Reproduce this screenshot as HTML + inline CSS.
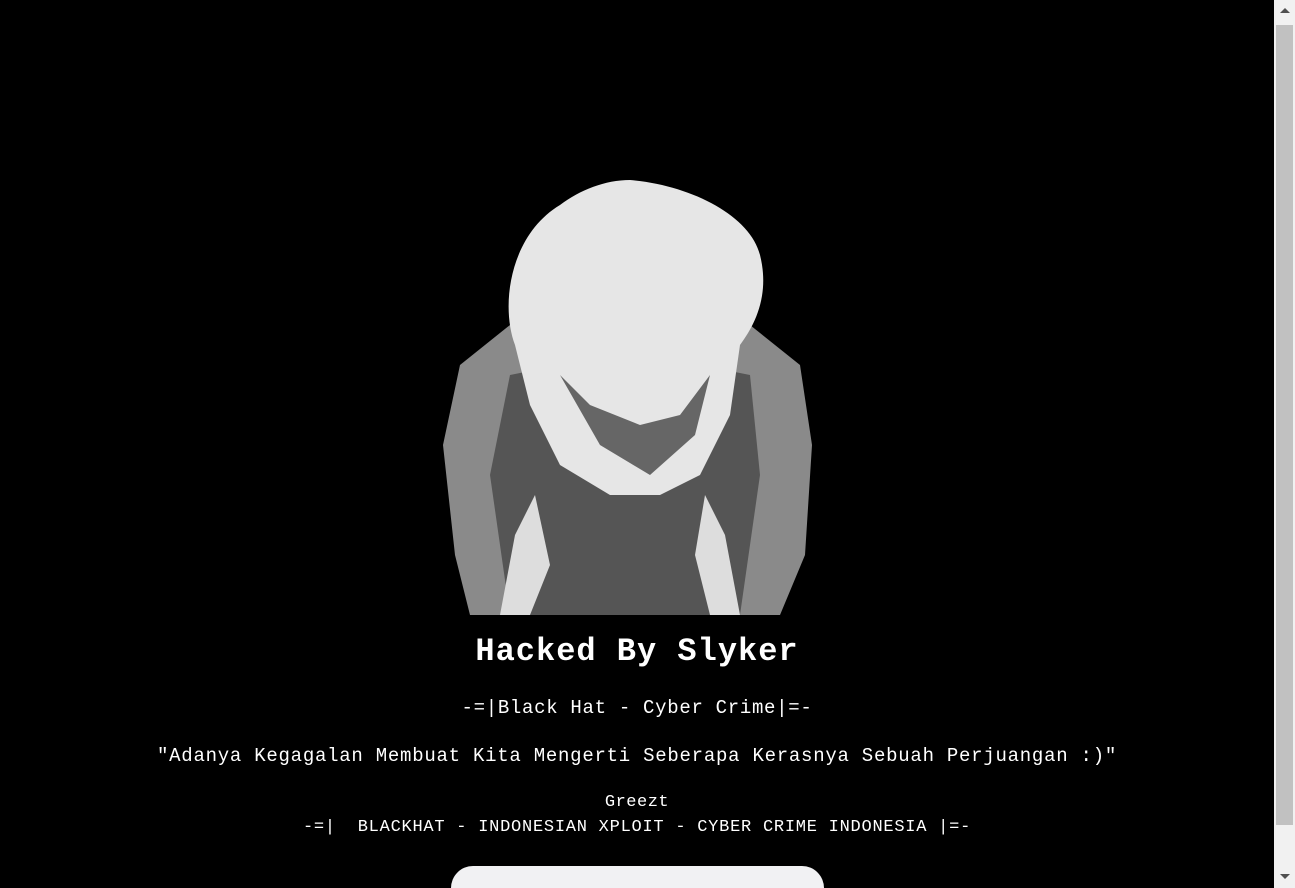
<!DOCTYPE html>
<html><head><style>
html,body{margin:0;padding:0;background:#000;overflow:hidden;}
body{width:1295px;height:888px;position:relative;font-family:"Liberation Mono",monospace;color:#fff;}
.t{position:absolute;left:0;width:1274px;text-align:center;white-space:nowrap;}
.sb{position:absolute;left:1274px;top:0;width:21px;height:888px;background:#f1f1f1;}
.th{position:absolute;left:1276px;top:25px;width:17px;height:800px;background:#c1c1c1;}
</style></head><body>
<svg style="position:absolute;left:440px;top:175px" width="375" height="440" viewBox="0 0 375 440">
<rect x="0" y="0" width="375" height="440" fill="#000"/>
<path d="M20 190 L70 150 L120 150 L140 200 L230 200 L260 150 L310 150 L360 190 L372 270 L365 380 L340 440 L30 440 L15 380 L3 270 Z" fill="#8a8a8a"/>
<path d="M70 200 L120 190 L150 260 L220 260 L260 190 L310 200 L320 300 L300 440 L70 440 L50 300 Z" fill="#555"/>
<path d="M190 5 C250 10 310 40 320 80 C330 120 315 150 300 170 L290 240 L260 300 L220 320 L170 320 L120 290 L90 230 L75 170 C60 130 70 60 120 30 C140 15 165 5 190 5 Z" fill="#e6e6e6"/>
<path d="M120 200 L160 270 L210 300 L255 260 L270 200 L240 240 L200 250 L150 230 Z" fill="#666"/>
<path d="M95 320 L110 390 L90 440 L60 440 L75 360 Z" fill="#ddd"/>
<path d="M265 320 L285 360 L300 440 L270 440 L255 380 Z" fill="#ddd"/>
</svg>
<div class="t" style="top:633px;font-size:32px;font-weight:bold;letter-spacing:1px;">Hacked By Slyker</div>
<div class="t" style="top:697px;font-size:19px;letter-spacing:0.7px;">-=|Black Hat - Cyber Crime|=-</div>
<div class="t" style="top:745px;font-size:19px;letter-spacing:0.75px;">"Adanya Kegagalan Membuat Kita Mengerti Seberapa Kerasnya Sebuah Perjuangan :)"</div>
<div class="t" style="top:793px;font-size:17px;letter-spacing:0.5px;">Greezt</div>
<div class="t" style="top:818px;font-size:17px;letter-spacing:0.75px;">-=|&nbsp;&nbsp;BLACKHAT - INDONESIAN XPLOIT - CYBER CRIME INDONESIA |=-</div>
<div style="position:absolute;left:451px;top:866px;width:373px;height:22px;border-radius:40px 40px 0 0;background:#f1f1f3;"></div>
<div class="sb"></div><div class="th"></div>
<div style="position:absolute;left:1280px;top:8px;width:0;height:0;border-left:5px solid transparent;border-right:5px solid transparent;border-bottom:5px solid #505050;"></div>
<div style="position:absolute;left:1280px;top:874px;width:0;height:0;border-left:5px solid transparent;border-right:5px solid transparent;border-top:5px solid #505050;"></div>
</body></html>
